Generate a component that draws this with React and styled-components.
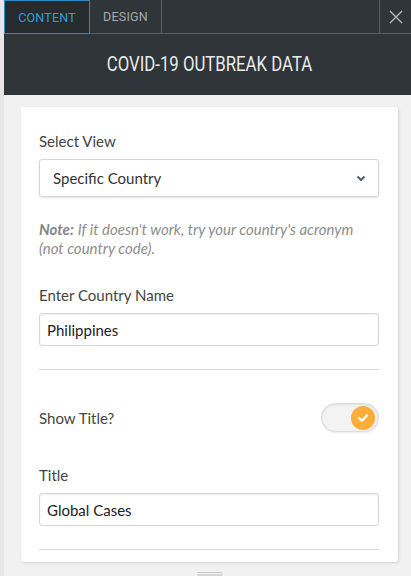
import React from "react";
import styled, { createGlobalStyle } from "styled-components";

const Global = createGlobalStyle`
  html, body { margin: 0; padding: 0; }
  body {
    background: #f1f1f1;
    font-family: "Lato", "Noto Sans", sans-serif;
    overflow: hidden;
  }
  * { box-sizing: border-box; }
`;

const Panel = styled.div`
  width: 411px;
  height: 576px;
  display: flex;
  flex-direction: column;
  background: #f1f1f1;
  border-left: 4px solid #e6e6e6;
  overflow: hidden;
`;

const TabBar = styled.div`
  display: flex;
  height: 34px;
  background: #2f3538;
  border-bottom: 1px solid #575d61;
  margin-left: -4px;
  padding-left: 4px;
`;

const Tab = styled.div`
  display: flex;
  align-items: center;
  justify-content: center;
  width: ${(p) => p.$w}px;
  height: ${(p) => (p.$active ? 34 : 33)}px;
  font-family: "Roboto", sans-serif;
  font-size: 12.5px;
  letter-spacing: 0.2px;
  color: ${(p) => (p.$active ? "#2a9fd8" : "#a4aaae")};
  border: ${(p) => (p.$active ? "1px solid #2a8cc0" : "none")};
  border-right: 1px solid ${(p) => (p.$active ? "#2a8cc0" : "#575d61")};
  background: ${(p) => (p.$active ? "#262b2e" : "transparent")};
`;

const Spacer = styled.div`
  flex: 1;
`;

const CloseBtn = styled.div`
  width: 32px;
  height: 33px;
  display: flex;
  align-items: center;
  justify-content: center;
  border-left: 1px solid #575d61;
`;

const Header = styled.div`
  height: 61px;
  background: #2f3538;
  display: flex;
  align-items: center;
  justify-content: center;
  margin-left: -4px;
  padding-left: 8px;
`;

const Heading = styled.h1`
  margin: 0;
  font-family: "Roboto", sans-serif;
  font-weight: 400;
  font-size: 19.5px;
  color: #e9ebec;
  transform: scaleX(0.86);
  white-space: nowrap;
`;

const Body = styled.div`
  flex: 1;
  position: relative;
  padding: 12px 13px 0 17px;
`;

const Card = styled.div`
  background: #fff;
  border-radius: 3px;
  box-shadow: 1px 1px 3px rgba(0, 0, 0, 0.12);
  padding: 24px 19px 11px 18px;
  height: 455px;
`;

const Field = styled.div`
  display: flex;
  flex-direction: column;
  margin-bottom: ${(p) => p.$mb || 0}px;
`;

const Label = styled.label`
  font-size: 15px;
  color: #444;
  line-height: 20px;
  margin-bottom: ${(p) => p.$mb ?? 8}px;
`;

const SelectBox = styled.div`
  height: 38px;
  border: 1px solid #d3d6d8;
  border-radius: 3px;
  box-shadow: 0 1px 2px rgba(0, 0, 0, 0.1);
  display: flex;
  align-items: center;
  justify-content: space-between;
  padding: 0 12px 0 13px;
  font-size: 15px;
  color: #333;
`;

const Input = styled.div`
  height: 33px;
  border: 1px solid #d3d6d8;
  border-radius: 3px;
  box-shadow: inset 0 1px 2px rgba(0, 0, 0, 0.07);
  display: flex;
  align-items: center;
  padding: 0 7px;
  font-size: 15px;
  color: #222;
`;

const Note = styled.p`
  margin: 0 0 27px;
  font-size: 15px;
  line-height: 19px;
  font-style: italic;
  color: #8d8d8d;
`;

const NoteLead = styled.strong`
  font-weight: 700;
  color: #858585;
  margin-right: 4px;
`;

const Divider = styled.hr`
  border: none;
  border-top: 1px solid #d6dadc;
  margin: 0;
`;

const ToggleRow = styled.div`
  display: flex;
  align-items: center;
  justify-content: space-between;
  margin: 33px 0 33px;
`;

const Toggle = styled.div`
  width: 58px;
  height: 29px;
  border-radius: 15px;
  background: #f3f3f3;
  border: 1px solid #dcdcdc;
  box-shadow: inset 0 1px 3px rgba(0, 0, 0, 0.08), 0 1px 2px rgba(0, 0, 0, 0.08);
  display: flex;
  align-items: center;
  justify-content: flex-end;
  padding-right: 3px;
`;

const Knob = styled.div`
  width: 24px;
  height: 24px;
  border-radius: 50%;
  background: #fbad3b;
  display: flex;
  align-items: center;
  justify-content: center;
`;

const Handle = styled.div`
  position: absolute;
  left: 50%;
  bottom: 0;
  transform: translateX(-50%);
  width: 25px;
  height: 4px;
  border-top: 1px solid #c9c9c9;
  border-bottom: 2px solid #d6d6d6;
  margin-left: 2px;
`;

export default function App() {
  return (
    <>
      <Global />
      <Panel>
        <TabBar>
          <Tab $active $w={86}>CONTENT</Tab>
          <Tab $w={72}>DESIGN</Tab>
          <Spacer />
          <CloseBtn>
            <svg width="14" height="14" viewBox="0 0 14 14">
              <path d="M1 1 L13 13 M13 1 L1 13" stroke="#b5babd" strokeWidth="1.4" />
            </svg>
          </CloseBtn>
        </TabBar>
        <Header>
          <Heading>COVID-19 OUTBREAK DATA</Heading>
        </Header>
        <Body>
          <Card>
            <Field $mb={23}>
              <Label>Select View</Label>
              <SelectBox>
                <span>Specific Country</span>
                <svg width="10" height="7" viewBox="0 0 10 7">
                  <path d="M1.5 1.5 L5 5 L8.5 1.5" stroke="#56606a" strokeWidth="2" fill="none" />
                </svg>
              </SelectBox>
            </Field>
            <Note>
              <NoteLead>Note:</NoteLead>If it doesn't work, try your country's acronym (not country code).
            </Note>
            <Field $mb={23}>
              <Label>Enter Country Name</Label>
              <Input>Philippines</Input>
            </Field>
            <Divider />
            <ToggleRow>
              <Label $mb={0}>Show Title?</Label>
              <Toggle>
                <Knob>
                  <svg width="12" height="10" viewBox="0 0 12 10">
                    <path d="M2 5 L5 7.8 L10 2.2" stroke="#fff" strokeWidth="2.2" fill="none" strokeLinecap="round" strokeLinejoin="round" />
                  </svg>
                </Knob>
              </Toggle>
            </ToggleRow>
            <Field $mb={23}>
              <Label>Title</Label>
              <Input>Global Cases</Input>
            </Field>
            <Divider />
          </Card>
          <Handle />
        </Body>
      </Panel>
    </>
  );
}
